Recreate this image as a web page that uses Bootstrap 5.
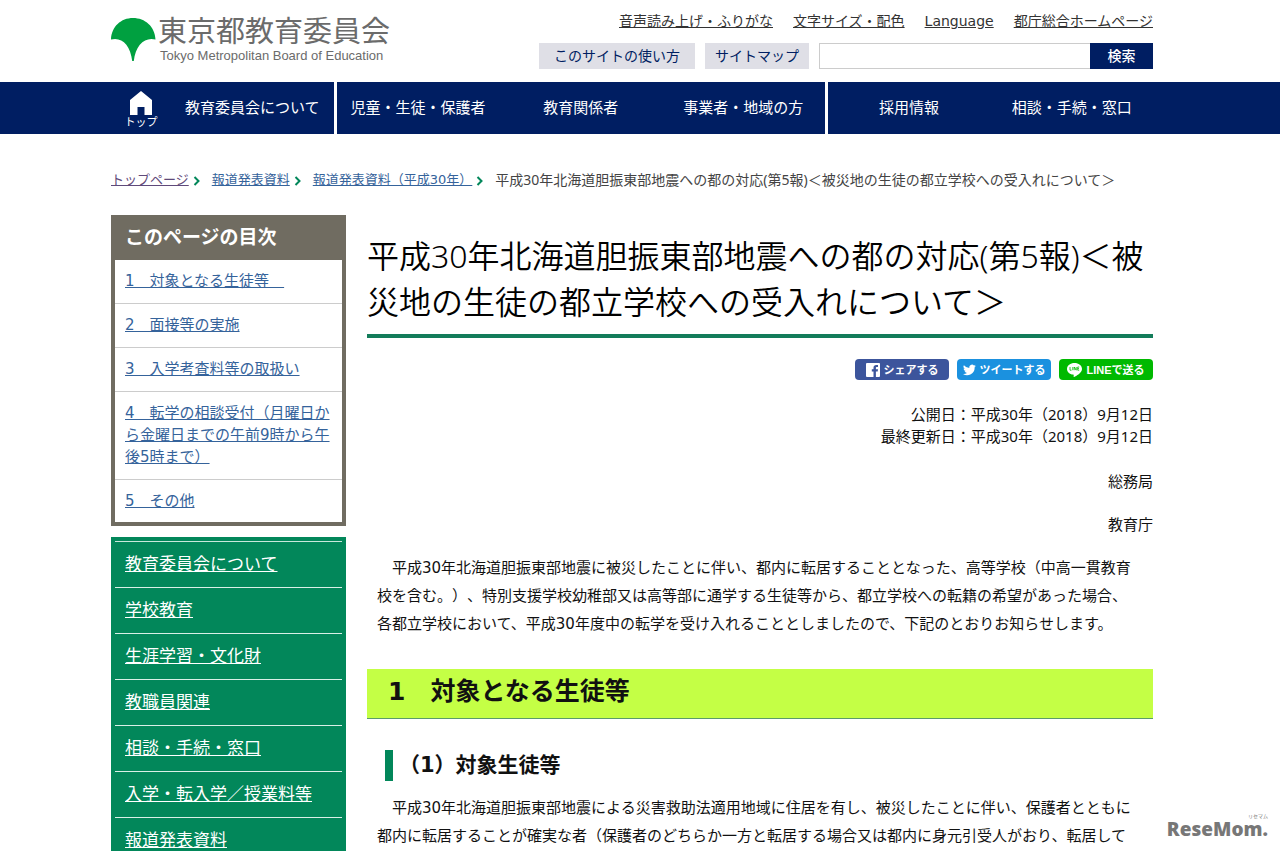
<!DOCTYPE html>
<html lang="ja">
<head>
<meta charset="utf-8">
<meta name="viewport" content="width=device-width, initial-scale=1">
<title>東京都教育委員会</title>
<link rel="stylesheet" href="https://cdn.jsdelivr.net/npm/bootstrap@5.3.0/dist/css/bootstrap.min.css">
<script src="https://cdn.jsdelivr.net/npm/bootstrap@5.3.0/dist/js/bootstrap.bundle.min.js"></script>
<style>
  body { font-family: "DejaVu Sans", "Noto Sans CJK JP", sans-serif; font-size: 15px; line-height: 22px; color: #111; background: #fff; text-spacing-trim: space-all; }
  .page-width { max-width: 1042px; margin-inline: auto; }
  a { color: #35639b; }

  .site-header { height: 82px; }
  .logo-mark { width: 45px; height: 45px; margin-top: 17px; }
  .logo-text { color: #6b6b6b; text-decoration: none; margin-left: 2px; padding-top: 16px; }
  .logo-ja { font-size: 29px; line-height: 32px; }
  .logo-en { font-family: "Liberation Sans", sans-serif; font-size: 13px; line-height: 15px; padding-left: 2px; }
  .util-links { gap: 20px; font-size: 14px; line-height: 20px; padding-top: 11px; }
  .util-links a { color: #333; }
  .util-tools { gap: 10px; margin-top: 12px; }
  .util-tools a { background: #dfdfe6; color: #001e62; font-size: 14px; line-height: 26px; text-decoration: none; padding: 0 10px; }
  .util-tools .guide { padding: 0 15px; }
  .search-box input { width: 271px; height: 26px; border: 1px solid #ccc; border-right: 0; border-radius: 0; padding: 0 6px; }
  .search-box button { width: 63px; height: 26px; border: 0; background: #001e62; color: #fff; font-size: 14px; font-weight: 500; line-height: 26px; padding: 0; }

  .global-nav { background: #001e62; }
  .global-nav ul { height: 52px; }
  .global-nav li { flex: 1 1 0; }
  .global-nav .home-item { flex: 0 0 60px; }
  .global-nav .split { border-right: 3px solid #fff; }
  .global-nav a { color: #fff; text-decoration: none; }
  .home-item a { font-size: 11px; line-height: 14px; }

  .crumbs { font-size: 13px; line-height: 22px; padding-top: 35px; margin-bottom: 24px; }
  .crumbs .here { font-family: "Noto Sans", "Noto Sans CJK JP", sans-serif; font-size: 14px; color: #444; }
  .crumbs .visited { color: #5f4a7a; }
  .crumbs svg { margin: 2px 11px 0 4px; }

  .columns { gap: 21px; }
  .side { flex: 0 0 235px; }
  .toc { border: 4px solid #706c61; border-top: 0; margin-bottom: 11px; }
  .toc h2 { background: #706c61; color: #fff; font-size: 19px; font-weight: 700; line-height: 45px; margin: 0; padding-left: 10px; }
  .toc li { padding: 10px 10px 11px; border-bottom: 1px solid #ccc; }
  .toc li:last-child { border-bottom: 0; padding-bottom: 10px; }
  .local-menu { background: #02875a; padding: 4px 4px 0; }
  .local-menu ul { border-top: 1px solid #c9e8dc; }
  .local-menu li { border-bottom: 1px solid #d9f0e7; padding-left: 10px; font-size: 17px; line-height: 45px; }
  .local-menu a { color: #fff; }

  .article h1 { font-family: "Noto Sans", "Noto Sans CJK JP", sans-serif; font-size: 32px; font-weight: 350; line-height: 46px; color: #000; border-bottom: 4px solid #137c5a; padding: 18px 0 9px; margin: 0 0 21px; }
  .share { gap: 8px; }
  .share a { width: 94px; height: 21px; border-radius: 4px; color: #fff; font-family: "Liberation Sans", "Noto Sans CJK JP", sans-serif; font-size: 11px; font-weight: 700; line-height: 20px; text-decoration: none; gap: 4px; }
  .share .fb { background: #3c559c; }
  .share .tw { background: #1b91df; }
  .share .ln { background: #00b900; }
  .dates { font-family: "Noto Sans", "Noto Sans CJK JP", sans-serif; padding-top: 23px; margin-bottom: 24px; }
  .office { margin-bottom: 21px; }
  .office-last { margin-bottom: 18px; }
  .body-text { line-height: 28px; padding: 0 14px 0 10px; margin: 0; }
  .article h2 { background: #c4ff45; border-bottom: 1px solid #5a9c6a; font-size: 25px; font-weight: 700; line-height: 33px; color: #111; padding: 6px 21px 10px; margin: 31px 0; }
  .article h3 { border-left: 8px solid #02875a; font-size: 21px; font-weight: 700; line-height: 31px; padding-left: 6px; margin: 0 0 13px 18px; }
  .watermark { right: 12px; bottom: 12px; color: #777; font-family: "Open Sans", sans-serif; font-weight: 800; }
  .watermark .kana { font-family: "Noto Sans CJK JP", sans-serif; font-size: 5px; line-height: 7px; font-weight: 400; }
  .watermark .brand { font-size: 19px; line-height: 20px; }
</style>
</head>
<body>
<div class="vh-100 overflow-hidden position-relative">

  <header class="pe-3">
    <div class="page-width site-header d-flex justify-content-between">
      <div class="d-flex">
        <svg class="logo-mark" viewBox="0 0 45 45" aria-hidden="true"><path fill="#00a040" d="M0 22.500C.5 9.500 10 1 22 1s22 8.500 22.500 21.500C34 19.500 24.500 28 22.800 44h-1.600C19.500 28 10.500 19.500 0 22.500z"/></svg>
        <a href="#" class="logo-text d-flex flex-column">
          <span class="logo-ja">東京都教育委員会</span>
          <span class="logo-en">Tokyo Metropolitan Board of Education</span>
        </a>
      </div>
      <div>
        <div class="util-links d-flex justify-content-end">
          <a href="#">音声読み上げ・ふりがな</a>
          <a href="#">文字サイズ・配色</a>
          <a href="#">Language</a>
          <a href="#">都庁総合ホームページ</a>
        </div>
        <div class="util-tools d-flex justify-content-end">
          <a href="#" class="guide">このサイトの使い方</a>
          <a href="#">サイトマップ</a>
          <form class="search-box d-flex">
            <input type="text" aria-label="サイト内検索">
            <button type="button">検索</button>
          </form>
        </div>
      </div>
    </div>
  </header>

  <nav class="global-nav pe-3">
    <ul class="page-width list-unstyled d-flex text-center mb-0">
      <li class="home-item"><a href="#" class="h-100 d-flex flex-column align-items-center justify-content-end pb-1">
        <svg width="22" height="25" viewBox="0 0 22 25" aria-hidden="true"><path fill="#fff" d="M11 0 0 9v15h7.500v-8h7v8H22V9z"/></svg>トップ</a></li>
      <li class="split d-flex align-items-center justify-content-center"><a href="#">教育委員会について</a></li>
      <li class="d-flex align-items-center justify-content-center"><a href="#">児童・生徒・保護者</a></li>
      <li class="d-flex align-items-center justify-content-center"><a href="#">教育関係者</a></li>
      <li class="split d-flex align-items-center justify-content-center"><a href="#">事業者・地域の方</a></li>
      <li class="d-flex align-items-center justify-content-center"><a href="#">採用情報</a></li>
      <li class="d-flex align-items-center justify-content-center"><a href="#">相談・手続・窓口</a></li>
    </ul>
  </nav>

  <div class="pe-3">
    <div class="page-width">
      <nav class="crumbs d-flex align-items-center text-nowrap" aria-label="パンくず">
        <a href="#" class="visited">トップページ</a>
        <svg width="8" height="10" viewBox="0 0 8 10" aria-hidden="true"><path d="M1.500 1 5.500 5l-4 4" fill="none" stroke="#02875a" stroke-width="2"/></svg>
        <a href="#">報道発表資料</a>
        <svg width="8" height="10" viewBox="0 0 8 10" aria-hidden="true"><path d="M1.500 1 5.500 5l-4 4" fill="none" stroke="#02875a" stroke-width="2"/></svg>
        <a href="#">報道発表資料（平成30年）</a>
        <svg width="8" height="10" viewBox="0 0 8 10" aria-hidden="true"><path d="M1.500 1 5.500 5l-4 4" fill="none" stroke="#02875a" stroke-width="2"/></svg>
        <span class="here">平成30年北海道胆振東部地震への都の対応(第5報)＜被災地の生徒の都立学校への受入れについて＞</span>
      </nav>

      <div class="columns d-flex align-items-start">
        <aside class="side">
          <section class="toc">
            <h2>このページの目次</h2>
            <ul class="list-unstyled mb-0">
              <li><a href="#sec1">1　対象となる生徒等　</a></li>
              <li><a href="#">2　面接等の実施</a></li>
              <li><a href="#">3　入学考査料等の取扱い</a></li>
              <li><a href="#">4　転学の相談受付（月曜日から金曜日までの午前9時から午後5時まで）</a></li>
              <li><a href="#">5　その他</a></li>
            </ul>
          </section>
          <nav class="local-menu">
            <ul class="list-unstyled mb-0">
              <li><a href="#">教育委員会について</a></li>
              <li><a href="#">学校教育</a></li>
              <li><a href="#">生涯学習・文化財</a></li>
              <li><a href="#">教職員関連</a></li>
              <li><a href="#">相談・手続・窓口</a></li>
              <li><a href="#">入学・転入学／授業料等</a></li>
              <li><a href="#">報道発表資料</a></li>
            </ul>
          </nav>
        </aside>

        <main class="article flex-fill">
          <h1>平成30年北海道胆振東部地震への都の対応(第5報)＜被災地の生徒の都立学校への受入れについて＞</h1>
          <div class="share d-flex justify-content-end">
            <a href="#" class="fb d-flex align-items-center justify-content-center">
              <svg width="14" height="14" viewBox="0 0 14 14" aria-hidden="true"><rect width="14" height="14" rx="1" fill="#fff"/><path fill="#3c559c" d="M7.500 14V8.500H5.800V6.300h1.700V4.700c0-1.800 1.100-2.700 2.700-2.700H12v2h-1.100c-.8 0-1 .4-1 1v1.300H12l-.3 2.200H9.900V14z"/></svg>シェアする</a>
            <a href="#" class="tw d-flex align-items-center justify-content-center">
              <svg width="13" height="12" viewBox="0 0 24 20" aria-hidden="true"><path fill="#fff" d="M24 2.400a10 10 0 0 1-2.800.8A5 5 0 0 0 23.300.5a10 10 0 0 1-3.100 1.200 4.900 4.900 0 0 0-8.400 4.500A14 14 0 0 1 1.700 1a4.900 4.900 0 0 0 1.500 6.600A5 5 0 0 1 1 7a4.900 4.900 0 0 0 4 4.900 5 5 0 0 1-2.300.1 4.900 4.900 0 0 0 4.600 3.400A10 10 0 0 1 0 17.400 14 14 0 0 0 21.500 5z"/></svg>ツイートする</a>
            <a href="#" class="ln d-flex align-items-center justify-content-center">
              <svg width="15" height="14" viewBox="0 0 15 14" aria-hidden="true"><path fill="#fff" d="M7.500 0C3.400 0 0 2.600 0 5.900c0 2.900 2.600 5.200 6.100 5.700.9.200.6.900.5 2 0 .3.200.5.600.3C9 13 15 9.800 15 5.900 15 2.600 11.600 0 7.500 0z"/><path d="M3 4v3.200h1.500M5.800 4v3.200M7.200 7.200V4l2 3.200V4M12.200 4h-1.500v3.200h1.500m-1.500-1.600h1.300" fill="none" stroke="#00b900" stroke-width=".8"/></svg>LINEで送る</a>
          </div>
          <div class="dates text-end">公開日：平成30年（2018）9月12日<br>最終更新日：平成30年（2018）9月12日</div>
          <p class="office text-end">総務局</p>
          <p class="office-last text-end">教育庁</p>
          <p class="body-text">　平成30年北海道胆振東部地震に被災したことに伴い、都内に転居することとなった、高等学校（中高一貫教育校を含む。）、特別支援学校幼稚部又は高等部に通学する生徒等から、都立学校への転籍の希望があった場合、各都立学校において、平成30年度中の転学を受け入れることとしましたので、下記のとおりお知らせします。</p>
          <h2 id="sec1">1　対象となる生徒等</h2>
          <h3>（1）対象生徒等</h3>
          <p class="body-text">　平成30年北海道胆振東部地震による災害救助法適用地域に住居を有し、被災したことに伴い、保護者とともに都内に転居することが確実な者（保護者のどちらか一方と転居する場合又は都内に身元引受人がおり、転居して</p>
        </main>
      </div>
    </div>
  </div>

  <div class="watermark position-absolute d-flex flex-column align-items-end">
    <span class="kana">リセマム</span>
    <span class="brand">ReseMom.</span>
  </div>
</div>
</body>
</html>
